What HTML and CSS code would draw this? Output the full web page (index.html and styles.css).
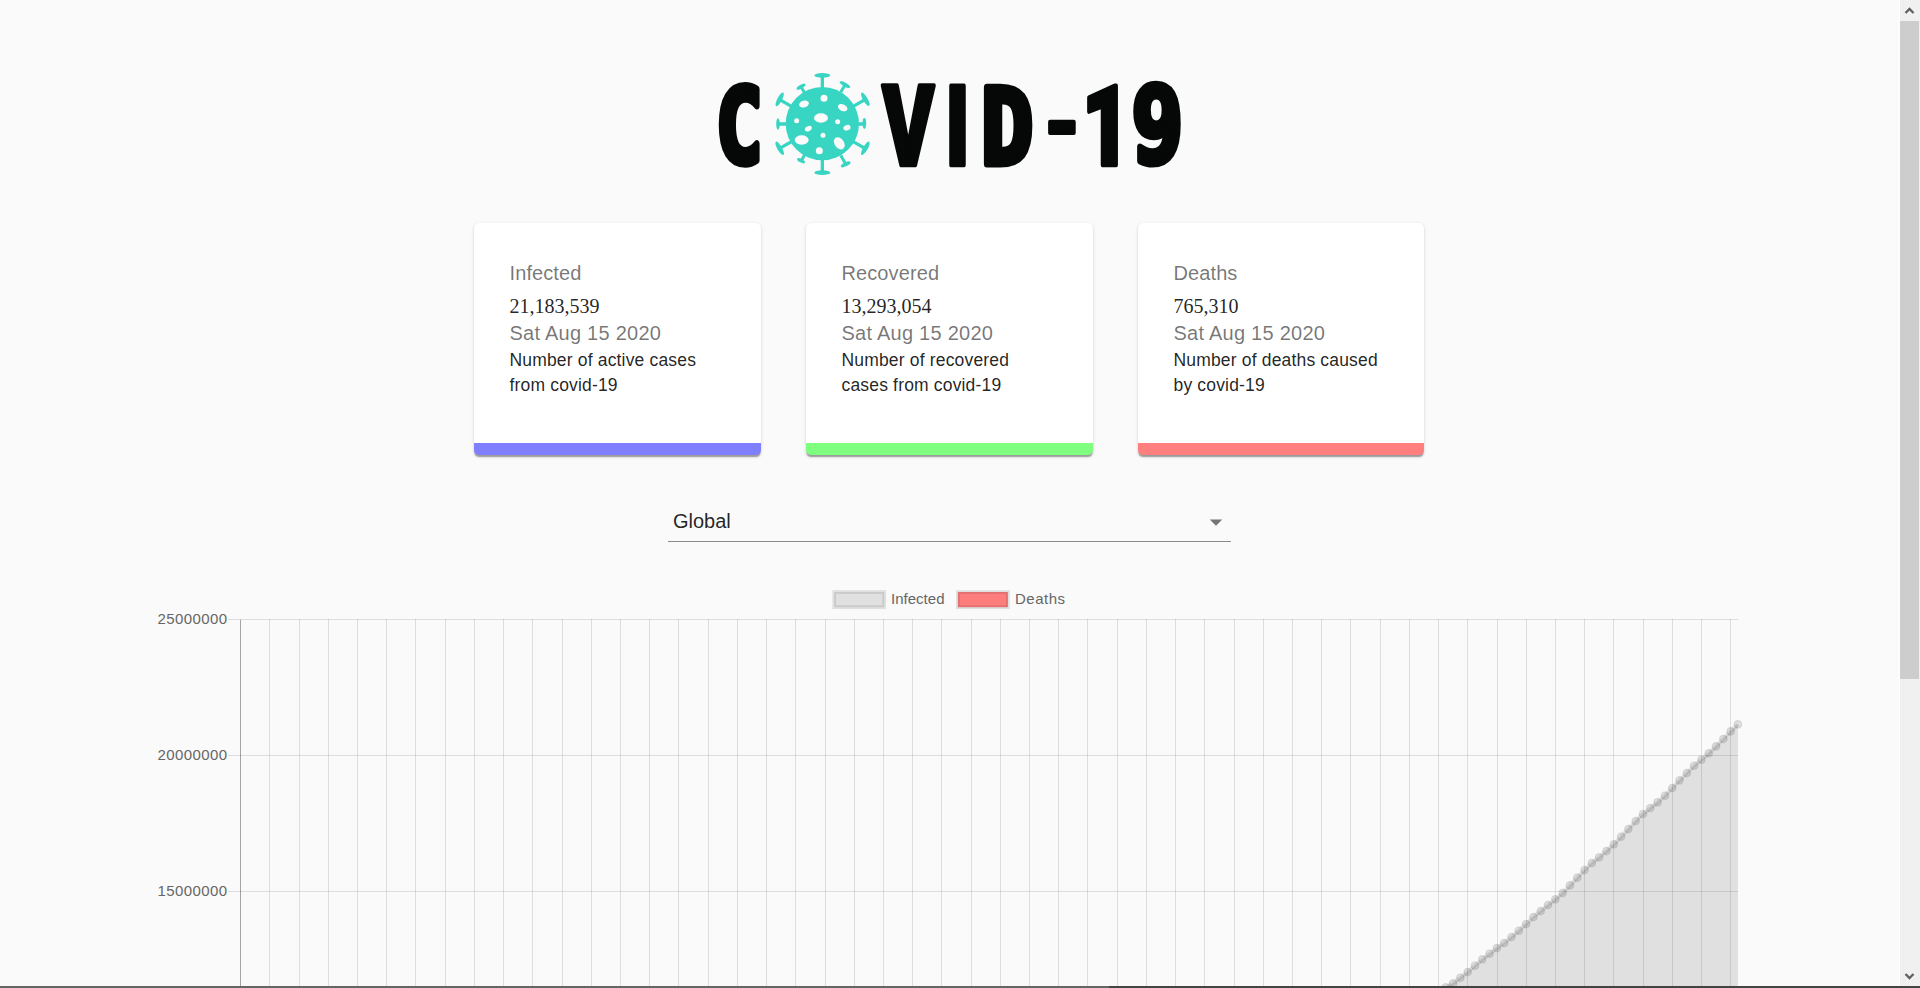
FILE: index.html
```html
<!DOCTYPE html>
<html lang="en">
<head>
<meta charset="utf-8">
<title>COVID-19 Tracker</title>
<link rel="stylesheet" href="styles.css">
</head>
<body>
<div class="window">
  <main class="page">
    <svg class="logo" viewBox="0 0 1500 390" role="img" aria-label="COVID-19">
      <g class="logo-letters">
        <text class="square" data-box="54 69 181 323">C</text>
        <text data-box="539 71 710 322">V</text>
        <text data-box="745 71 799 322">I</text>
        <text class="square" data-box="849 71 999 322">D</text>
        <text data-box="1043 178 1128 224">-</text>
        <text data-box="1160 71 1255 322">1</text>
        <text class="square" data-box="1298 68 1444 323">9</text>
      </g>
      <g class="virus">
        <circle cx="367" cy="191" r="110"/>
        <path class="stem" d="M367 46V338M234 192H492M239 119L495 265M495 119L239 265"/>
        <path class="stem thin" d="M303 81L315 100M435 75L422 97M437 312L422 286M304 302L314 284"/>
        <ellipse cx="367" cy="46" rx="24" ry="7"/>
        <ellipse cx="367" cy="338" rx="24" ry="7"/>
        <ellipse cx="234" cy="192" rx="5.500" ry="17"/>
        <ellipse cx="493" cy="190" rx="5.500" ry="17"/>
        <ellipse cx="239" cy="118" rx="7" ry="23" transform="rotate(28 239 118)"/>
        <ellipse cx="496" cy="118" rx="7" ry="23" transform="rotate(-30 496 118)"/>
        <ellipse cx="239" cy="265" rx="7" ry="23" transform="rotate(-30 239 265)"/>
        <ellipse cx="496" cy="265" rx="7" ry="23" transform="rotate(30 496 265)"/>
        <ellipse cx="303" cy="80" rx="15" ry="5.500" transform="rotate(-30 303 80)"/>
        <ellipse cx="435" cy="74" rx="18" ry="6" transform="rotate(29 435 74)"/>
        <ellipse cx="437" cy="313" rx="16" ry="6" transform="rotate(-27 437 313)"/>
        <ellipse cx="303" cy="302" rx="13" ry="5.500" transform="rotate(27 303 302)"/>
      </g>
      <g class="holes">
        <circle cx="372" cy="115" r="10.500"/>
        <ellipse cx="312" cy="132" rx="15" ry="10" transform="rotate(-18 312 132)"/>
        <ellipse cx="428" cy="143" rx="15" ry="10" transform="rotate(25 428 143)"/>
        <ellipse cx="363" cy="174" rx="21" ry="14"/>
        <circle cx="290" cy="182" r="7.500"/>
        <circle cx="413" cy="185" r="7.500"/>
        <ellipse cx="325" cy="206" rx="11" ry="7.500" transform="rotate(-25 325 206)"/>
        <ellipse cx="441" cy="203" rx="11" ry="8" transform="rotate(-20 441 203)"/>
        <circle cx="369" cy="226" r="7.500"/>
        <ellipse cx="305" cy="240" rx="21" ry="14"/>
        <ellipse cx="418" cy="250" rx="14" ry="20" transform="rotate(-35 418 250)"/>
        <circle cx="358" cy="272" r="10.500"/>
      </g>
    </svg>

    <section class="cards">
      <article class="card infected">
        <h2 class="label">Infected</h2>
        <div class="count">21,183,539</div>
        <p class="date">Sat Aug 15 2020</p>
        <p class="note">Number of active cases<br>from covid-19</p>
      </article>
      <article class="card recovered">
        <h2 class="label">Recovered</h2>
        <div class="count">13,293,054</div>
        <p class="date">Sat Aug 15 2020</p>
        <p class="note">Number of recovered<br>cases from covid-19</p>
      </article>
      <article class="card deaths">
        <h2 class="label">Deaths</h2>
        <div class="count">765,310</div>
        <p class="date">Sat Aug 15 2020</p>
        <p class="note">Number of deaths caused<br>by covid-19</p>
      </article>
    </section>

    <div class="picker">
      <span>Global</span>
      <svg class="caret" viewBox="0 0 24 24"><path d="M7 10l5 5 5-5z"/></svg>
    </div>

    <svg class="chart" viewBox="0 580 1899 406">
      <g class="legend">
        <rect class="swatch" x="834.200" y="592" width="50" height="15.200"/>
        <text x="891" y="604" textLength="53.500">Infected</text>
        <rect class="swatch red" x="957.900" y="592" width="50" height="15.200"/>
        <text x="1015" y="604" textLength="50">Deaths</text>
      </g>
      <g class="axis">
        <text x="157.500" y="624" textLength="69.500">25000000</text>
        <text x="157.500" y="760" textLength="69.500">20000000</text>
        <text x="157.500" y="896" textLength="69.500">15000000</text>
      </g>
      <g id="grid" class="grid"></g>
      <g id="series" class="series"></g>
    </svg>
  </main>

  <aside class="scrollbar">
    <svg class="arrow" viewBox="0 0 20 21"><path d="M5.500 13L9.500 9L13.500 13"/></svg>
    <div class="thumb"></div>
    <svg class="arrow" viewBox="0 0 20 21"><path d="M5.500 9L9.500 13L13.500 9"/></svg>
  </aside>
</div>
<div class="taskbar-edge"></div>
<script src="app.js"></script>
</body>
</html>
```

FILE: styles.css
```css
* { box-sizing: border-box; }
body {
  margin: 0;
  height: 988px;
  overflow: hidden;
  background: #fafafa;
  font-family: "Liberation Sans", Arial, sans-serif;
  color: rgba(0, 0, 0, .87);
}
h2, p { margin: 0; font-weight: 400; }
.window { display: flex; height: 986px; }
.page {
  width: 1900px;
  height: 986px;
  padding-top: 60px;
  border-right: 1px solid #fff;
  display: flex;
  flex-direction: column;
  align-items: center;
  overflow: hidden;
}
.logo { width: 500px; height: 130px; flex: none; overflow: visible; }
.logo-letters text {
  font-family: Roboto, sans-serif;
  font-weight: 900;
  font-size: 100px;
  fill: #050807;
  stroke: #050807;
  stroke-width: 4px;
  stroke-linejoin: round;
  vector-effect: non-scaling-stroke;
}
.logo-letters .square { font-family: "DejaVu Sans Mono", monospace; font-weight: 700; stroke-width: 6.500px; }
.virus { fill: #39d5c3; }
.stem { fill: none; stroke: #39d5c3; stroke-width: 10; }
.stem.thin { stroke-width: 9; }
.holes { fill: #fafafa; }

.cards { display: flex; gap: 45px; margin-top: 33px; flex: none; }
.card {
  width: 287px;
  height: 232px;
  padding: 35px 35.500px 0;
  background: #fff;
  border-radius: 5px;
  border-bottom: 12px solid;
  box-shadow: 0 2.500px 1.250px -1.250px rgba(0, 0, 0, .2), 0 1.250px 1.250px rgba(0, 0, 0, .14), 0 1.250px 3.750px rgba(0, 0, 0, .12);
}
.infected { border-bottom-color: #7f7fff; }
.recovered { border-bottom-color: #7fff7f; }
.deaths { border-bottom-color: #ff7f7f; width: 286px; margin-right: 1px; }
.label, .date { font-size: 20px; color: rgba(0, 0, 0, .54); white-space: nowrap; }
.label { line-height: 30px; margin-bottom: 7px; letter-spacing: .1px; }
.count { font: 20px/23px "Liberation Serif", "Times New Roman", serif; margin-top: 5px; }
.date { line-height: 30px; letter-spacing: .25px; }
.note { font-size: 17.500px; line-height: 25px; letter-spacing: .17px; white-space: nowrap; }

.picker {
  display: flex;
  flex: none;
  justify-content: space-between;
  align-items: center;
  width: 563px;
  height: 40px;
  margin-top: 47px;
  padding: 0 0 0 5px;
  border-bottom: 1px solid #8b8b8b;
  font-size: 20px;
}
.caret { width: 30px; height: 30px; fill: #757575; margin-top: 1px; }

.chart { width: 1899px; height: 406px; flex: none; margin-top: 38px; }
.chart text { font-size: 15px; fill: #666; }
.swatch { fill: rgba(0, 0, 0, .1); stroke: rgba(0, 0, 0, .1); stroke-width: 3.750px; }
.swatch.red { fill: rgba(255, 0, 0, .5); }
.grid rect { fill: rgba(0, 0, 0, .11); shape-rendering: crispEdges; }
.grid .zero { fill: rgba(0, 0, 0, .26); }
.series .area { fill: rgba(0, 0, 0, .1); }
.series .line { fill: none; stroke: rgba(0, 0, 0, .1); stroke-width: 3.750px; }
.series circle { fill: rgba(0, 0, 0, .1); stroke: rgba(0, 0, 0, .1); stroke-width: 1.250px; }

.scrollbar {
  display: flex;
  flex-direction: column;
  width: 20px;
  height: 986px;
  background: #f0f0f0;
}
.thumb { width: 19px; height: 658px; background: #cdcdcd; margin-bottom: auto; }
.arrow { width: 20px; height: 21px; flex: none; fill: none; stroke: #606060; stroke-width: 2.300px; }
.taskbar-edge { height: 2px; background: linear-gradient(90deg, #666 1109px, #444 1109px); }
```

FILE: app.js
```javascript
const NS = 'http://www.w3.org/2000/svg';

function add(parent, name, attrs) {
  const el = document.createElementNS(NS, name);
  for (const key in attrs) el.setAttribute(key, attrs[key]);
  parent.appendChild(el);
}

// Stretch each wordmark letter to fill its box, leaving room for the outline.
const ctx = document.createElement('canvas').getContext('2d');
document.querySelectorAll('.logo-letters text').forEach(el => {
  const square = el.classList.contains('square');
  const outline = square ? 19.5 : 12;
  ctx.font = square ? '700 100px "DejaVu Sans Mono"' : '900 100px Roboto';
  const [x0, y0, x1, y1] = el.dataset.box.split(' ').map(Number);
  const m = ctx.measureText(el.textContent);
  const sx = (x1 - x0 - outline) / (m.actualBoundingBoxRight + m.actualBoundingBoxLeft);
  const sy = (y1 - y0 - outline) / (m.actualBoundingBoxAscent + m.actualBoundingBoxDescent);
  const tx = x0 + outline / 2 + m.actualBoundingBoxLeft * sx;
  const ty = y0 + outline / 2 + m.actualBoundingBoxAscent * sy;
  el.setAttribute('transform', `translate(${tx} ${ty}) scale(${sx} ${sy})`);
});

// Grid: one vertical line per four days, one horizontal line per five million.
const left = 240.1, step = 7.305, days = 205;
const grid = document.getElementById('grid');
for (let i = 0; i <= days; i += 4) {
  add(grid, 'rect', { x: Math.round(left + i * step), y: 619, width: 1, height: 367 });
}
[619, 755, 891].forEach(y => add(grid, 'rect', { x: 228, y, width: 1510, height: 1 }));
add(grid, 'rect', { class: 'zero', x: 240, y: 620, width: 1, height: 366 });

// Heights of the infected series, latest day first, in thirds of a pixel below y = 700.
const heights = [73, 94, 117, 139, 160, 179, 197, 219, 241, 264, 287, 307, 324, 342, 363, 387,
  410, 433, 453, 472, 489, 510, 533, 556, 579, 598, 615, 633, 651, 672, 692, 711, 729, 744,
  761, 778, 797, 816, 833, 850, 862, 876, 892];
const points = heights.map((h, i) => [left + (days - i) * step + 0.3, 700 + h / 3]);
const series = document.getElementById('series');
const path = points.map(p => p.join(',')).join(' ');
const last = points[points.length - 1];
add(series, 'polygon', { class: 'area', points: `${points[0][0]},1010 ${path} ${last[0]},1010` });
add(series, 'polyline', { class: 'line', points: path });
points.forEach(([cx, cy]) => add(series, 'circle', { cx, cy, r: 3.75 }));
```
